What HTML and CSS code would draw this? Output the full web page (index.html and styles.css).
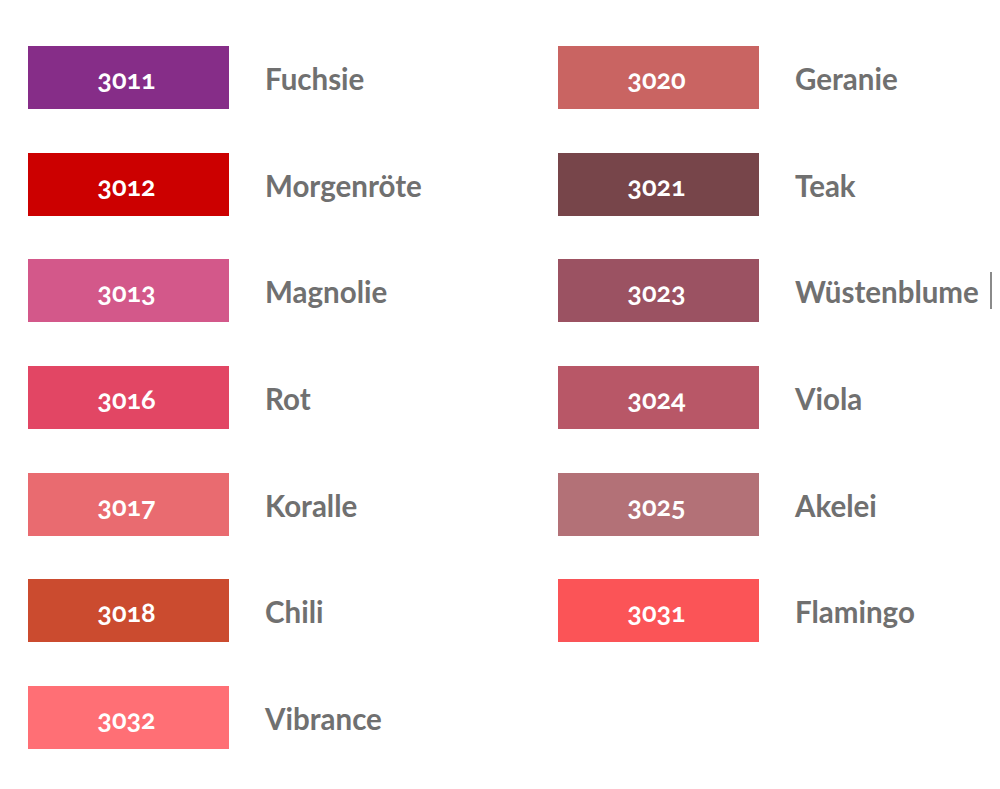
FILE: index.html
```html
<!DOCTYPE html>
<html lang="de">
<head>
<meta charset="utf-8">
<title>Farbtöne</title>
<link rel="stylesheet" href="styles.css">
</head>
<body>
<main class="palette">
  <section class="column">
    <div class="swatch-row"><div class="chip c3011">3011</div><span class="name">Fuchsie</span></div>
    <div class="swatch-row"><div class="chip c3012">3012</div><span class="name">Morgenröte</span></div>
    <div class="swatch-row"><div class="chip c3013">3013</div><span class="name">Magnolie</span></div>
    <div class="swatch-row"><div class="chip c3016">3016</div><span class="name">Rot</span></div>
    <div class="swatch-row"><div class="chip c3017">3017</div><span class="name">Koralle</span></div>
    <div class="swatch-row"><div class="chip c3018">3018</div><span class="name">Chili</span></div>
    <div class="swatch-row"><div class="chip c3032">3032</div><span class="name">Vibrance</span></div>
  </section>
  <section class="column column-right">
    <div class="swatch-row"><div class="chip c3020">3020</div><span class="name">Geranie</span></div>
    <div class="swatch-row"><div class="chip c3021">3021</div><span class="name">Teak</span></div>
    <div class="swatch-row"><div class="chip c3023">3023</div><span class="name">Wüstenblume</span><span class="divider"></span></div>
    <div class="swatch-row"><div class="chip c3024">3024</div><span class="name">Viola</span></div>
    <div class="swatch-row"><div class="chip c3025">3025</div><span class="name">Akelei</span></div>
    <div class="swatch-row"><div class="chip c3031">3031</div><span class="name">Flamingo</span></div>
  </section>
</main>
</body>
</html>
```

FILE: styles.css
```css
html, body {
  margin: 0;
  padding: 0;
  background: #ffffff;
}

body {
  width: 1000px;
  height: 789px;
  overflow: hidden;
  font-family: Lato, "Open Sans", "Liberation Sans", sans-serif;
}

.palette {
  display: flex;
  padding: 46px 0 0 28px;
}

.column {
  flex: 0 0 530px;
  display: flex;
  flex-direction: column;
  gap: 43.67px;
}

.column-right {
  flex: 1 1 auto;
}

.swatch-row {
  display: flex;
  align-items: center;
  height: 63px;
}

.chip {
  flex: 0 0 201px;
  height: 63px;
  display: flex;
  align-items: center;
  justify-content: center;
  color: #ffffff;
  font-size: 27px;
  font-weight: 700;
  font-variant-numeric: oldstyle-nums;
  font-feature-settings: "onum" 1;
  padding-right: 4px;
  box-sizing: border-box;
  padding-top: 2px;
}

.name {
  margin-left: 36px;
  color: #707070;
  font-size: 29.5px;
  font-weight: 700;
  padding-top: 2px;
  white-space: nowrap;
}

.divider {
  flex: 0 0 2px;
  height: 37px;
  background: #8a8a8a;
  margin-left: 11px;
}

.c3011 { background: #862d88; }
.c3012 { background: #cc0000; }
.c3013 { background: #d3588a; }
.c3016 { background: #e24664; }
.c3017 { background: #e96b70; }
.c3018 { background: #cb4b2f; }
.c3032 { background: #ff6f75; }
.c3020 { background: #c96462; }
.c3021 { background: #77454a; }
.c3023 { background: #9b5262; }
.c3024 { background: #b85767; }
.c3025 { background: #b37177; }
.c3031 { background: #fb5457; }
```
